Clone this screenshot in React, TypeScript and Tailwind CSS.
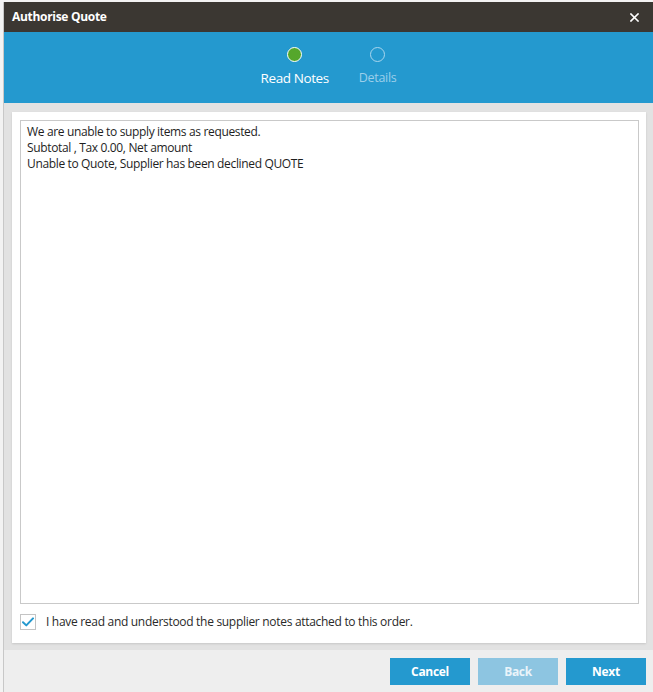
import React, { useState } from 'react';

const font = { fontFamily: '"Open Sans", "Noto Sans", sans-serif' };

const CheckIcon: React.FC = () => (
    <svg width="12" height="10" viewBox="0 0 12 10" fill="none">
        <path d="M1 5.2 4.3 8.4 11 1.4" stroke="#2499cf" strokeWidth="2" strokeLinecap="round" strokeLinejoin="round" />
    </svg>
);

const CloseIcon: React.FC = () => (
    <svg width="9" height="9" viewBox="0 0 9 9" stroke="white" strokeWidth="1.6" strokeLinecap="square">
        <path d="M1 1 8 8M8 1 1 8" />
    </svg>
);

const notes = [
    'We are unable to supply items as requested.',
    'Subtotal , Tax 0.00, Net amount',
    'Unable to Quote, Supplier has been declined QUOTE',
];

export default function App() {
    const [checked, setChecked] = useState(true);

    return (
        <div className="w-[653px] h-[692px] bg-[#f3f3f3] pt-[2px] pl-[3px] overflow-hidden" style={font}>
            <div className="h-[690px] flex flex-col border-l border-[#c8c8c8] bg-[#e2e2e2]">
                {/* header */}
                <div className="h-[30px] bg-[#3b3732] flex items-center justify-between pl-[8px] pr-[14px] shrink-0">
                    <span className="text-white text-[12px] font-bold tracking-[-0.3px]">Authorise Quote</span>
                    <CloseIcon />
                </div>

                {/* stepper */}
                <div className="h-[71px] bg-[#2499cf] flex justify-center gap-[30px] pt-[15px] shrink-0">
                    <div className="flex flex-col items-center">
                        <div className="w-[15px] h-[15px] rounded-full bg-[#55a72b] border border-white" />
                        <span className="text-white text-[13.5px] mt-[7px] leading-[18px] tracking-[-0.4px]">Read Notes</span>
                    </div>
                    <div className="flex flex-col items-center">
                        <div className="w-[15px] h-[15px] rounded-full border border-[#a9d6ee]" />
                        <span className="text-[#9ccfea] text-[12.5px] mt-[7px] leading-[18px] tracking-[-0.3px]">Details</span>
                    </div>
                </div>

                {/* body */}
                <div className="flex-1 pt-[9px] pl-[8px] pr-[7px] pb-[7px]">
                    <div className="h-full bg-white shadow-[0_1px_2px_rgba(0,0,0,0.12)] pt-[8px] pl-[8px] pr-[7px] flex flex-col">
                        <div className="h-[484px] border border-[#c9c9c9] px-[6px] pt-[3px] text-[12px] leading-[16px] text-[#1e1e1e] tracking-[-0.35px]">
                            {notes.map(n => <div key={n}>{n}</div>)}
                        </div>
                        <label className="flex items-center mt-[9px] gap-[10px] cursor-pointer">
                            <span
                                onClick={() => setChecked(!checked)}
                                className="w-[16px] h-[16px] border border-[#c4c4c4] bg-white flex items-center justify-center"
                            >
                                {checked && <CheckIcon />}
                            </span>
                            <span className="text-[12px] text-[#2a2a2a] tracking-[-0.3px]">I have read and understood the supplier notes attached to this order.</span>
                        </label>
                    </div>
                </div>

                {/* footer */}
                <div className="h-[42px] bg-[#eeeeee] flex justify-end items-start gap-[8px] pt-[8px] pr-[7px] shrink-0">
                    <button className="w-[80px] h-[27px] bg-[#2499cf] text-white text-[12px] font-bold tracking-[-0.3px]">Cancel</button>
                    <button className="w-[80px] h-[27px] bg-[#8dc5e1] text-[#eaf4fa] text-[12px] font-bold tracking-[-0.3px]" disabled>Back</button>
                    <button className="w-[80px] h-[27px] bg-[#2499cf] text-white text-[12px] font-bold tracking-[-0.3px]">Next</button>
                </div>
            </div>
        </div>
    );
}
